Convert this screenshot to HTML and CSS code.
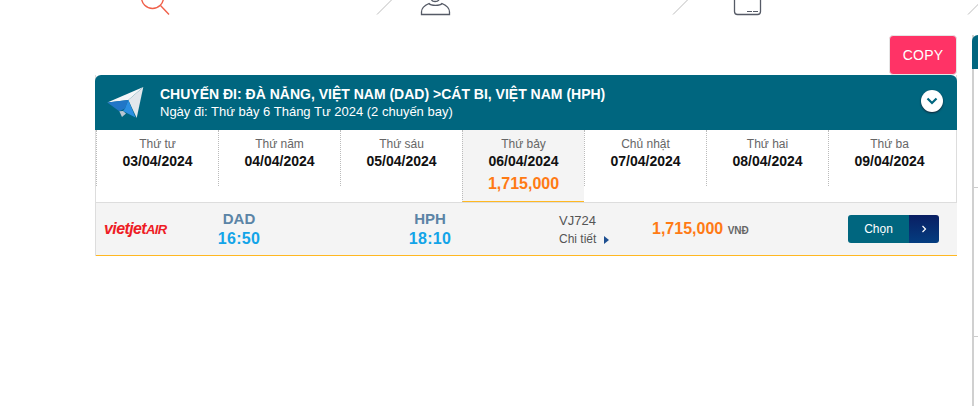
FILE: index.html
```html
<!DOCTYPE html>
<html lang="vi">
<head>
<meta charset="utf-8">
<title>Chuyến đi</title>
<link rel="stylesheet" href="styles.css">
</head>
<body>
<div class="topicons">
  <svg class="ic ic-search" width="32" height="16" viewBox="0 0 32 16"><circle cx="12.500" cy="-2.500" r="11" fill="none" stroke="#f0604a" stroke-width="1.400"/><path d="M20.500 5.500l8.500 9" fill="none" stroke="#f0604a" stroke-width="1.400"/></svg>
  <svg class="ic ic-sl1" width="16" height="16" viewBox="0 0 16 16"><path d="M1 14.500L15.500 0" stroke="#bdbdbd"/></svg>
  <svg class="ic ic-user" width="32" height="16" viewBox="0 0 32 16"><path d="M1.500 14.500H29.500V12C29.500 8 25.500 5 22 3.500C20 6 11 6 9 3.500C5.500 5 1.500 8 1.500 12Z" fill="none" stroke="#555a66" stroke-width="1.300"/><path d="M11.500 0C13 2 17 2 19 0" fill="none" stroke="#555a66" stroke-width="1.300"/></svg>
  <svg class="ic ic-sl2" width="16" height="16" viewBox="0 0 16 16"><path d="M1 14.500L15.500 0" stroke="#bdbdbd"/></svg>
  <svg class="ic ic-tab" width="30" height="16" viewBox="0 0 30 16"><path d="M1.500 0v11.500c0 2 1 3 3 3h20c2 0 3-1 3-3V0" fill="none" stroke="#555a66" stroke-width="1.300"/><path d="M14 11.500h5M20 11.500h5" stroke="#555a66"/></svg>
  <svg class="ic ic-sl3" width="16" height="16" viewBox="0 0 16 16"><path d="M1 14.500L15.500 0" stroke="#bdbdbd"/></svg>
</div>
<div class="side"><div class="side-head"></div><div class="side-rule r1"></div><div class="side-rule r2"></div></div>
<main class="wrap">
  <div class="copyrow"><button class="copy">COPY</button></div>
  <section class="card">
    <header class="head">
      <svg class="plane" width="38" height="34" viewBox="0 0 38 34">
        <path d="M36.300 1L.3 16.500 21.300 14z" fill="#f4f6f8"/>
        <path d="M36.300 1L21.300 14l8.400 18z" fill="#e2e7ec"/>
        <path d="M.3 16.500L21.300 14 18 22.500l-5.700 2.700z" fill="#2176c7"/>
        <path d="M21.300 14l7.200 17.500L16 25l2-2.500z" fill="#2c8fe2"/>
        <path d="M12.300 25.200L16 25l3 2.500-4 3.500z" fill="#b9c6d2"/>
      </svg>
      <div class="title">
        <div class="t1">CHUYẾN ĐI: ĐÀ NẴNG, VIỆT NAM (DAD) &gt;CÁT BI, VIỆT NAM (HPH)</div>
        <div class="t2">Ngày đi: Thứ bảy 6 Tháng Tư 2024 (2 chuyến bay)</div>
      </div>
      <span class="toggle"><svg width="12" height="8" viewBox="0 0 12 8"><path d="M1.500 1.500L6 6l4.500-4.500" fill="none" stroke="#00667f" stroke-width="2.200"/></svg></span>
    </header>
    <div class="days">
      <div class="day"><span class="dn">Thứ tư</span><b>03/04/2024</b></div>
      <div class="day"><span class="dn">Thứ năm</span><b>04/04/2024</b></div>
      <div class="day"><span class="dn">Thứ sáu</span><b>05/04/2024</b></div>
      <div class="day active"><span class="dn">Thứ bảy</span><b>06/04/2024</b><strong class="dp">1,715,000</strong></div>
      <div class="day"><span class="dn">Chủ nhật</span><b>07/04/2024</b></div>
      <div class="day"><span class="dn">Thứ hai</span><b>08/04/2024</b></div>
      <div class="day"><span class="dn">Thứ ba</span><b>09/04/2024</b></div>
    </div>
    <div class="flight">
      <div class="logo">vietjet<span class="air">AIR</span></div>
      <div class="pt pt-a"><span class="code">DAD</span><span class="time">16:50</span></div>
      <div class="pt pt-b"><span class="code">HPH</span><span class="time">18:10</span></div>
      <div class="info"><span class="fno">VJ724</span><span class="more">Chi tiết <i class="tri"></i></span></div>
      <div class="price"><strong>1,715,000</strong> <small>VNĐ</small></div>
      <button class="choose"><span class="cl">Chọn</span><span class="cr"><svg width="6" height="8" viewBox="0 0 6 8"><path d="M1.500 1l3 3-3 3" fill="none" stroke="#fff" stroke-width="1.200"/></svg></span></button>
    </div>
  </section>
</main>
</body>
</html>
```
FILE: styles.css
```css
* { box-sizing: border-box; }
html, body { margin: 0; height: 100%; }
body { background: #fff; font-family: "Liberation Sans", Arial, sans-serif; position: relative; overflow: hidden; width: 978px; height: 406px; }
.topicons { height: 16px; position: relative; }
.ic { position: absolute; top: 0; }
.ic-search { left: 140px; }
.ic-sl1 { left: 376px; }
.ic-user { left: 420px; }
.ic-sl2 { left: 672px; }
.ic-tab { left: 733px; }
.ic-sl3 { left: 967px; }
.side { position: absolute; left: 972px; top: 35px; width: 6px; height: 371px; border-left: 2px solid #d0d0d0; }
.side-head { height: 34px; background: #00667f; border-radius: 6px 0 0 0; margin-left: -2px; }
.side-rule { border-top: 1px solid #ccc; }
.r1 { margin-top: 118px; }
.r2 { margin-top: 148px; }
.wrap { margin-left: 95px; width: 862px; padding-top: 19px; }
.copyrow { display: flex; justify-content: flex-end; }
.copy { width: 68px; height: 40px; border: 1px solid #e5e5e5; border-radius: 4px; background: #ff3366; color: #fff; font: 14px "Liberation Sans", Arial, sans-serif; letter-spacing: .2px; padding: 0; }
.card { border-right: 1px solid #ddd; border-left: 1px solid #ddd; }
.head { height: 55px; margin: 0 -1px; background: #00667f; border-radius: 6px 6px 0 0; display: flex; align-items: center; color: #fff; padding-left: 12px; }
.plane { flex: none; margin: 0 15px 0 0; }
.title { flex: 1; }
.t1 { font-size: 14px; font-weight: bold; line-height: 18px; }
.t2 { font-size: 13px; line-height: 18px; }
.toggle { width: 22px; height: 22px; border-radius: 50%; background: #fff; margin: 0 14px 4px 0; display: flex; align-items: center; justify-content: center; box-shadow: 0 1px 2px #123; }
.days { display: grid; grid-template-columns: repeat(7, 122px); height: 72px; }
.day { height: 56px; border-left: 1px dotted #bbb; text-align: center; font-size: 12px; padding-top: 7px; display: flex; flex-direction: column; align-items: center; }
.dn { color: #666; line-height: 15px; }
.day b { color: #111; font-size: 14px; line-height: 19px; }
.day.active { height: 72px; background: #f4f4f4; border-bottom: 1px solid #ffb822; }
.dp { color: #ff7a14; font-size: 16px; line-height: 25px; }
.flight { height: 54px; margin: 0 -1px 0 0; background: #f4f4f4; border-top: 1px solid #ddd; border-bottom: 1px solid #ffb822; display: flex; align-items: center; }
.logo { width: 92px; padding-left: 8px; color: #ee1c25; font-size: 16px; font-weight: bold; font-style: italic; letter-spacing: -.6px; white-space: nowrap; }
.air { font-size: 13px; }
.pt { display: flex; flex-direction: column; align-items: center; width: 50px; }
.pt-a { margin-left: 26px; }
.pt-b { margin-left: 141px; }
.code { font-size: 15px; font-weight: bold; color: #5b84a6; line-height: 18px; }
.time { font-size: 16px; font-weight: bold; color: #12a4e8; line-height: 21px; letter-spacing: .3px; }
.info { margin-left: 104px; padding-top: 2px; display: flex; flex-direction: column; font-size: 12px; color: #555; line-height: 19px; width: 93px; }
.fno { font-size: 13px; }
.tri { display: inline-block; margin-left: 4px; border-left: 5px solid #1d4f91; border-top: 4.500px solid transparent; border-bottom: 4.500px solid transparent; vertical-align: -1px; }
.price { width: 196px; white-space: nowrap; }
.price strong { font-size: 16px; color: #ff7a14; }
.price small { font-size: 10px; color: #666; font-weight: bold; }
.choose { display: flex; width: 91px; height: 28px; padding: 0; border: 0; border-radius: 3px; overflow: hidden; color: #fff; font: 12px "Liberation Sans", Arial, sans-serif; }
.cl { width: 61px; background: #00667f; line-height: 28px; }
.cr { flex: 1; background: linear-gradient(#0a1f63, #043d80); display: flex; align-items: center; justify-content: center; }
```
